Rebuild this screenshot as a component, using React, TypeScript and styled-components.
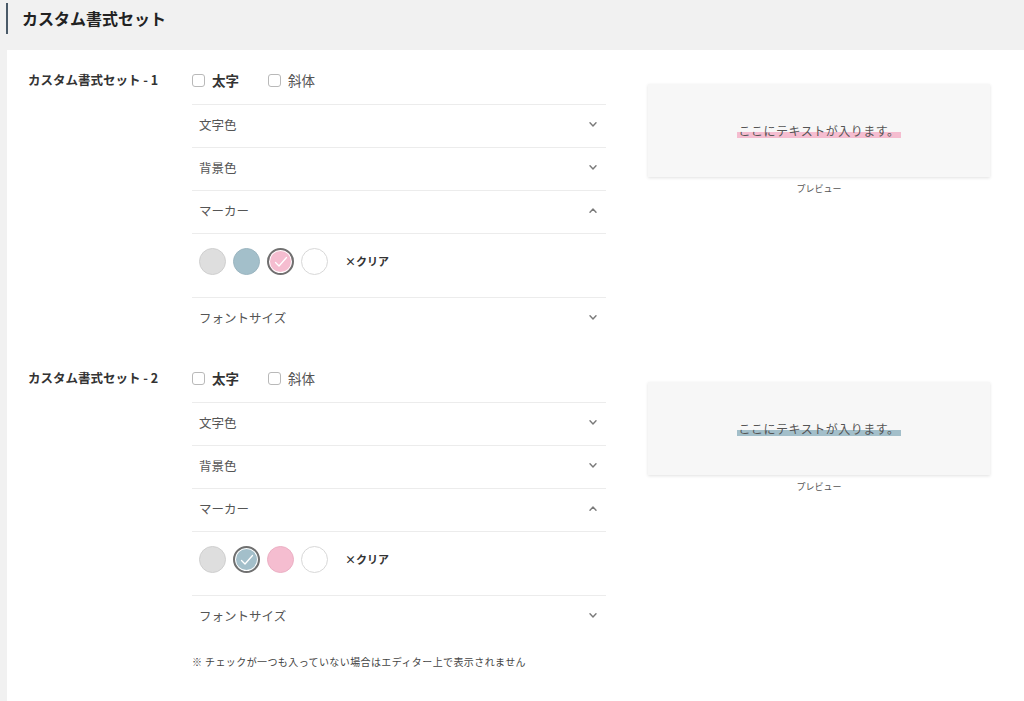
import React from "react";
import styled, { createGlobalStyle, css } from "styled-components";

const GlobalStyle = createGlobalStyle`
  html, body { margin: 0; padding: 0; background: #f1f1f1; }
  body { font-family: "Noto Sans CJK JP", "Noto Sans", sans-serif; color: #333; }
  * { box-sizing: border-box; }
`;

const Page = styled.div`
  width: 1024px;
  height: 701px;
  overflow: hidden;
  background: #f1f1f1;
  display: flex;
  flex-direction: column;
`;

const Header = styled.div`
  height: 50px;
  padding: 3px 0 0 6px;
`;

const Title = styled.h2`
  margin: 0;
  height: 31px;
  border-left: 2px solid #4a5a68;
  padding-left: 14px;
  font-size: 16px;
  font-weight: 700;
  line-height: 30px;
  color: #222;
`;

const Panel = styled.div`
  flex: 1;
  margin-left: 7px;
  background: #fff;
  padding: 18px 0 0 21px;
  display: flex;
  flex-direction: column;
  gap: 26px;
`;

const SetRow = styled.div`
  display: grid;
  grid-template-columns: 164px 414px 1fr;
  align-items: start;
`;

const SetLabel = styled.div`
  height: 24px;
  line-height: 24px;
  font-size: 12.5px;
  font-weight: 700;
  color: #333;
`;

const Options = styled.div`
  display: flex;
  flex-direction: column;
`;

const CheckRow = styled.div`
  height: 24px;
  margin-bottom: 12px;
  display: flex;
  align-items: center;
  gap: 29px;
`;

const CheckLabel = styled.label<{ $bold?: boolean }>`
  display: flex;
  align-items: center;
  gap: 7px;
  font-size: 13.5px;
  font-weight: ${(p) => (p.$bold ? 700 : 400)};
  color: ${(p) => (p.$bold ? "#333" : "#555")};
`;

const Box = styled.span`
  width: 13px;
  height: 13px;
  border: 1px solid #b9b9b9;
  border-radius: 3px;
  background: #fff;
`;

const AccHeader = styled.div`
  height: 43px;
  border-top: 1px solid #ececec;
  padding: 0 9px 3px 7px;
  display: flex;
  align-items: center;
  justify-content: space-between;
  font-size: 12.5px;
  color: #555;
`;

const SwatchArea = styled.div`
  height: 64px;
  border-top: 1px solid #ececec;
  padding: 14px 0 0 7px;
  display: flex;
  align-items: flex-start;
  gap: 7px;
`;

const Swatch = styled.span<{ $color: string; $border: string; $selected?: boolean }>`
  width: 27px;
  height: 27px;
  border-radius: 50%;
  background: ${(p) => p.$color};
  border: 1px solid ${(p) => p.$border};
  display: flex;
  align-items: center;
  justify-content: center;
  ${(p) =>
    p.$selected &&
    css`
      border: 2px solid #707070;
      box-shadow: inset 0 0 0 1px #fff;
    `}
`;

const Clear = styled.span`
  margin-left: 10px;
  height: 27px;
  line-height: 27px;
  font-size: 11px;
  font-weight: 700;
  color: #333;
`;

const PreviewCol = styled.div`
  padding: 16px 0 0 42px;
  display: flex;
  flex-direction: column;
  align-items: center;
  width: 384px;
`;

const PreviewBox = styled.div`
  width: 342px;
  height: 93px;
  background: #f7f7f7;
  box-shadow: 0 1px 3px rgba(0, 0, 0, 0.12);
  display: flex;
  align-items: center;
  justify-content: center;
`;

const PreviewText = styled.span<{ $marker: string }>`
  font-size: 12px;
  letter-spacing: 0.5px;
  color: #555;
  padding: 0 2px;
  line-height: 16px;
  background: linear-gradient(transparent 55%, ${(p) => p.$marker} 55%, ${(p) => p.$marker} 92%, transparent 92%);
`;

const Caption = styled.div`
  margin-top: 5px;
  font-size: 9px;
  color: #555;
`;

const Note = styled.div`
  margin: -10px 0 0 164px;
  font-size: 10px;
  letter-spacing: 0.4px;
  color: #444;
`;

const Chevron = ({ up }: { up?: boolean }) => (
  <svg width="8" height="5" viewBox="0 0 8 5" fill="none">
    <path
      d={up ? "M1 4.2 L4 1 L7 4.2" : "M1 0.8 L4 4 L7 0.8"}
      stroke="#7a7a7a"
      strokeWidth="1.4"
      strokeLinecap="round"
      strokeLinejoin="round"
    />
  </svg>
);

const Check = () => (
  <svg width="14" height="12" viewBox="0 0 14 12" fill="none">
    <path d="M1.5 6.5 L5 10 L12.5 1.5" stroke="#fff" strokeWidth="1.3" strokeLinecap="round" strokeLinejoin="round" />
  </svg>
);

const swatches = [
  { color: "#dedede", border: "#cfcfcf" },
  { color: "#a3bfca", border: "#9bb5c0" },
  { color: "#f5bdd0", border: "#ebb0c4" },
  { color: "#ffffff", border: "#d8d8d8" },
];

const FormatSet = ({ n, selected }: { n: number; selected: number }) => (
  <SetRow>
    <SetLabel>カスタム書式セット - {n}</SetLabel>
    <Options>
      <CheckRow>
        <CheckLabel $bold>
          <Box />
          太字
        </CheckLabel>
        <CheckLabel>
          <Box />
          斜体
        </CheckLabel>
      </CheckRow>
      <AccHeader>
        文字色
        <Chevron />
      </AccHeader>
      <AccHeader>
        背景色
        <Chevron />
      </AccHeader>
      <AccHeader>
        マーカー
        <Chevron up />
      </AccHeader>
      <SwatchArea>
        {swatches.map((s, i) => (
          <Swatch key={i} $color={s.color} $border={s.border} $selected={i === selected}>
            {i === selected && <Check />}
          </Swatch>
        ))}
        <Clear>×クリア</Clear>
      </SwatchArea>
      <AccHeader>
        フォントサイズ
        <Chevron />
      </AccHeader>
    </Options>
    <PreviewCol>
      <PreviewBox>
        <PreviewText $marker={swatches[selected].color}>ここにテキストが入ります。</PreviewText>
      </PreviewBox>
      <Caption>プレビュー</Caption>
    </PreviewCol>
  </SetRow>
);

export default function App() {
  return (
    <Page>
      <GlobalStyle />
      <Header>
        <Title>カスタム書式セット</Title>
      </Header>
      <Panel>
        <FormatSet n={1} selected={2} />
        <FormatSet n={2} selected={1} />
        <Note>※ チェックが一つも入っていない場合はエディター上で表示されません</Note>
      </Panel>
    </Page>
  );
}
